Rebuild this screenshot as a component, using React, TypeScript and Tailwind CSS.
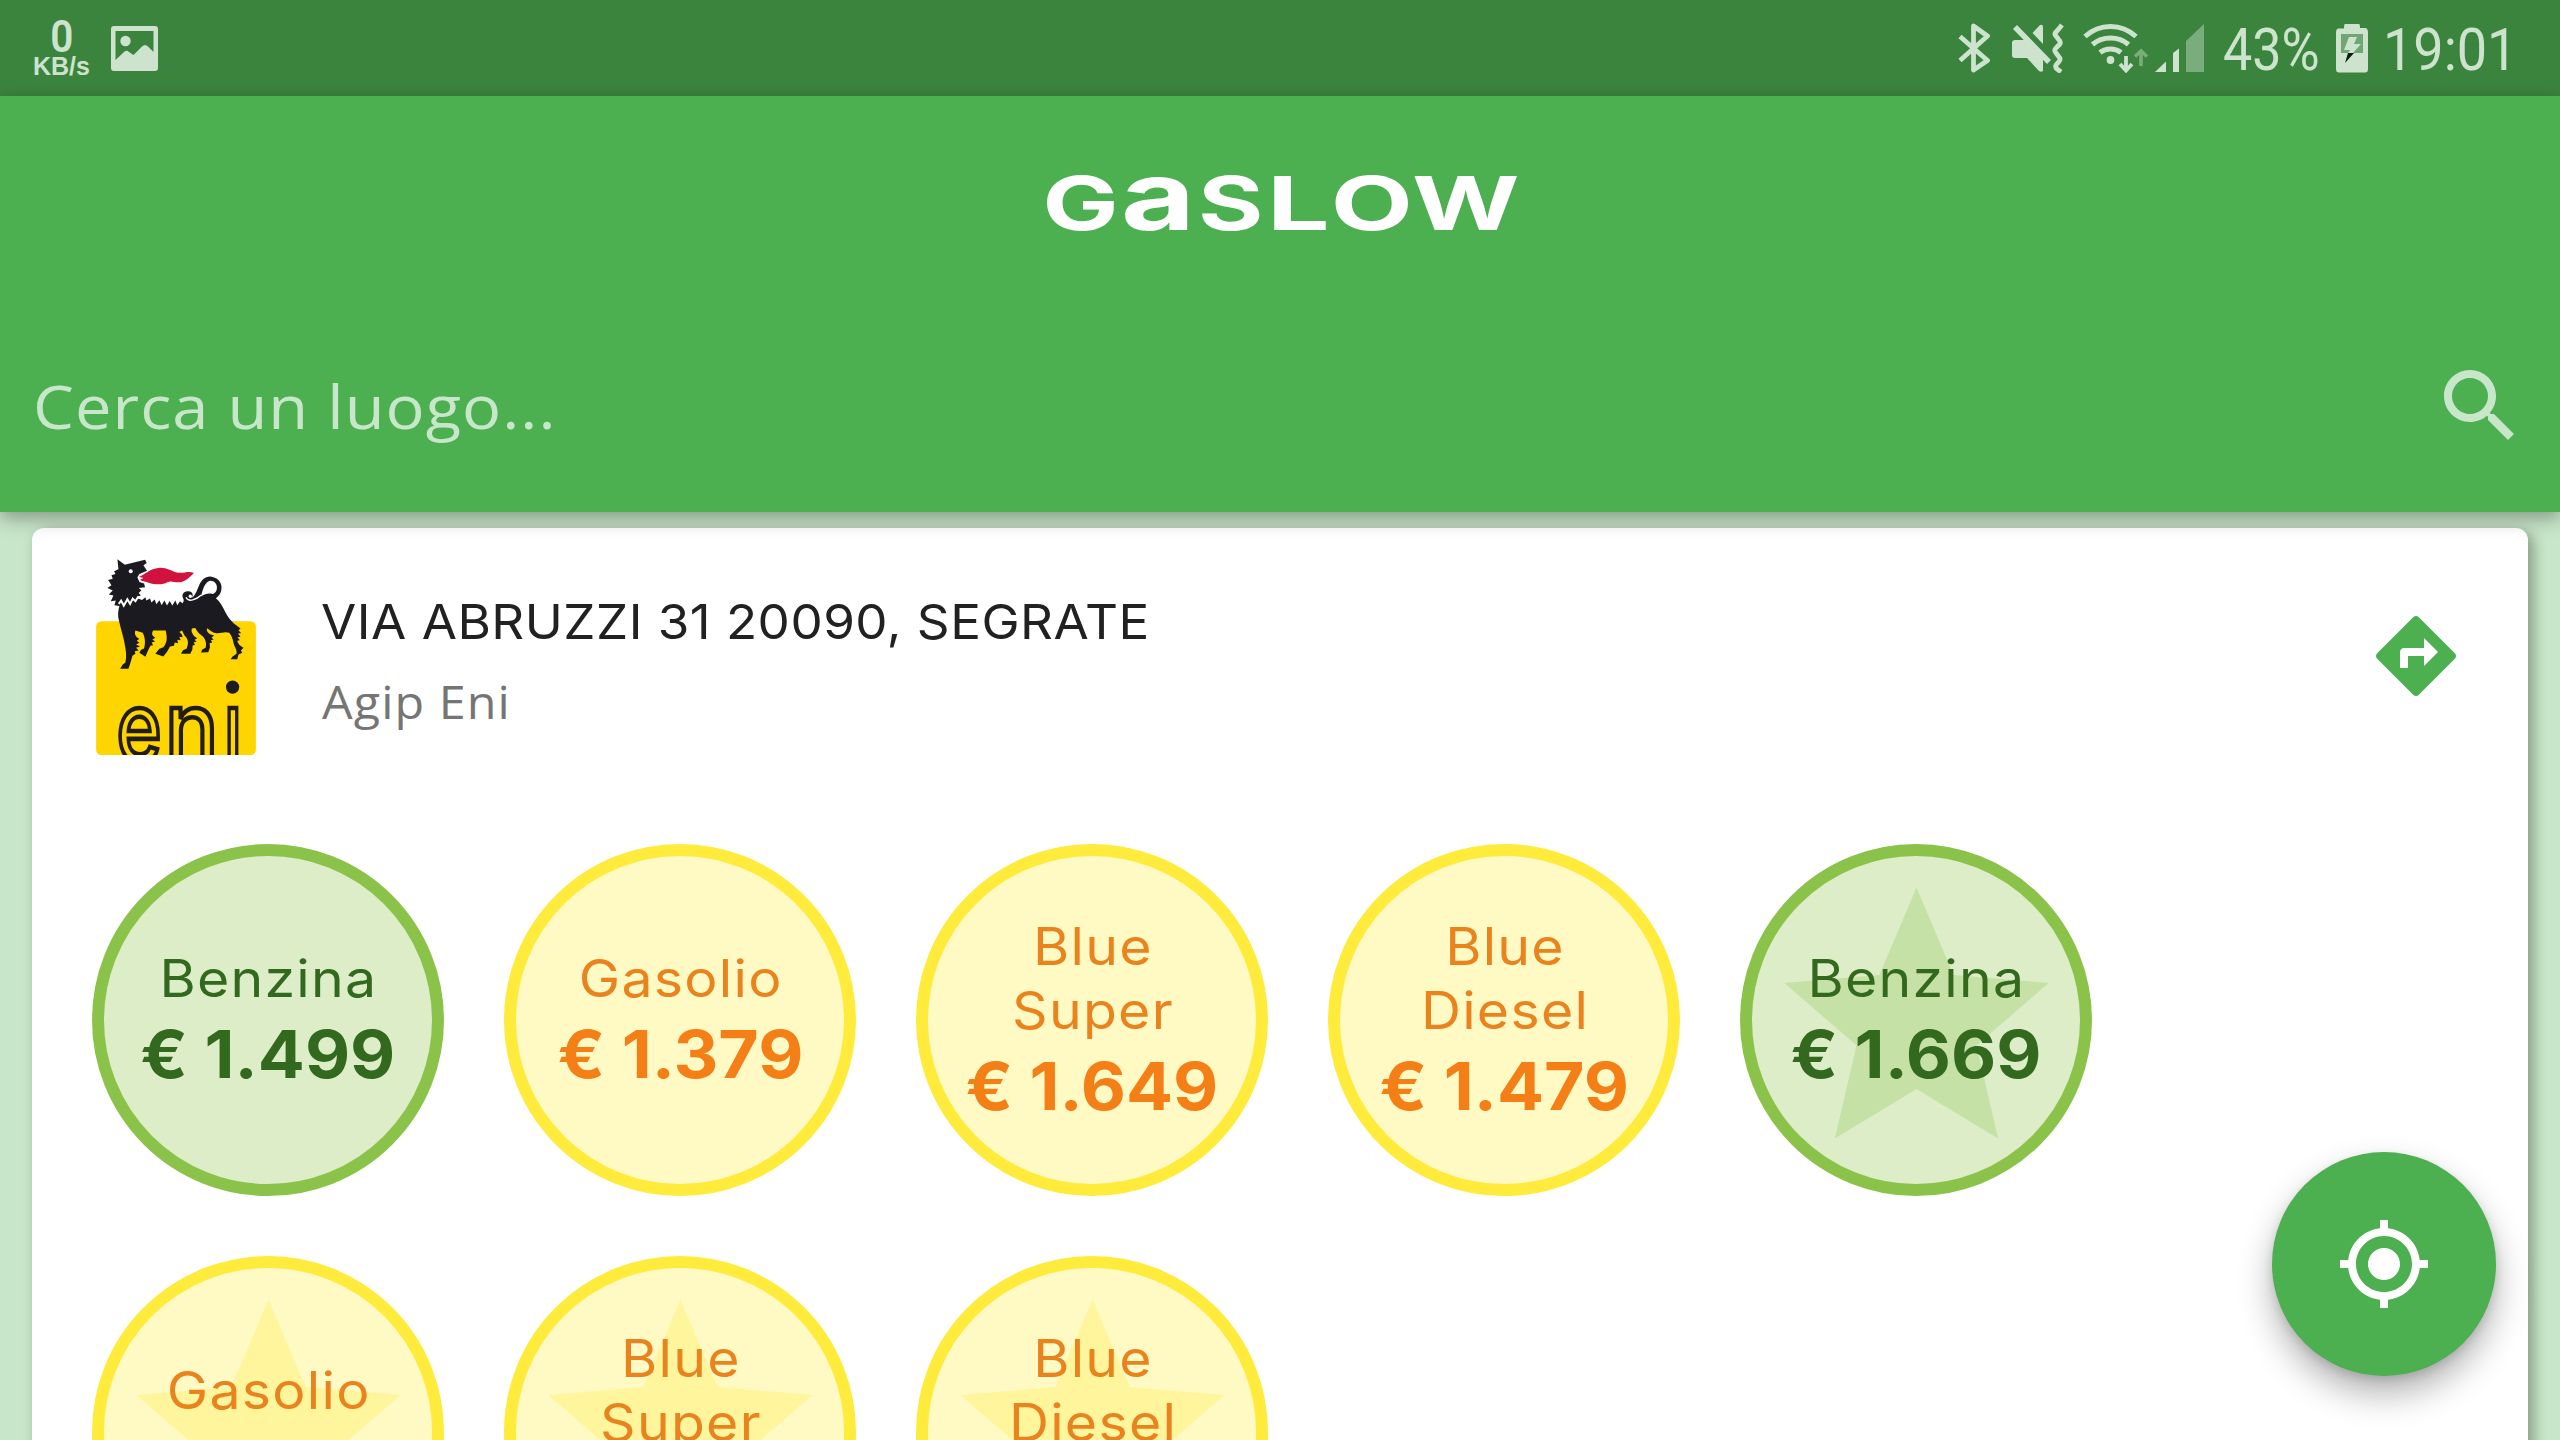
type Tone = "green" | "yellow";

interface Fuel {
  label: string[];
  price: string;
  tone: Tone;
  starred?: boolean;
}

const fuels: Fuel[] = [
  { label: ["Benzina"], price: "€ 1.499", tone: "green" },
  { label: ["Gasolio"], price: "€ 1.379", tone: "yellow" },
  { label: ["Blue", "Super"], price: "€ 1.649", tone: "yellow" },
  { label: ["Blue", "Diesel"], price: "€ 1.479", tone: "yellow" },
  { label: ["Benzina"], price: "€ 1.669", tone: "green", starred: true },
  { label: ["Gasolio"], price: "€ 1.379", tone: "yellow", starred: true },
  { label: ["Blue", "Super"], price: "€ 1.649", tone: "yellow", starred: true },
  { label: ["Blue", "Diesel"], price: "€ 1.479", tone: "yellow", starred: true },
];

const tones: Record<Tone, { ring: string; label: string; price: string; star: string }> = {
  green: {
    ring: "border-[#8bc34a] bg-[#dcedc8]",
    label: "text-[#33691e]",
    price: "text-[#33691e]",
    star: "text-[#c5e1a5]",
  },
  yellow: {
    ring: "border-[#ffeb3b] bg-[#fff9c4]",
    label: "text-[#e8831e]",
    price: "text-[#f57f17]",
    star: "text-[#fff59d]",
  },
};

function FuelBadge({ fuel }: { fuel: Fuel }) {
  const tone = tones[fuel.tone];
  return (
    <div
      className={`relative flex h-[352px] w-[352px] flex-col items-center justify-center rounded-full border-[12px] ${tone.ring}`}
    >
      {fuel.starred && (
        <svg
          viewBox="0 0 24 24"
          className={`absolute top-[5px] left-[5.5px] h-[317px] w-[317px] ${tone.star}`}
          fill="currentColor"
        >
          <path d="M12 17.27 18.18 21l-1.64-7.03L22 9.24l-7.19-.61L12 2 9.19 8.63 2 9.24l5.46 4.73L5.82 21z" />
        </svg>
      )}
      <div
        className={`relative scale-x-[1.065] pl-px text-center text-[52px] leading-[64px] tracking-[1.2px] ${tone.label}`}
      >
        {fuel.label.map((line) => (
          <div key={line}>{line}</div>
        ))}
      </div>
      <div
        className={`relative scale-x-[1.055] pt-1 text-[66px] leading-[78px] font-bold whitespace-nowrap ${tone.price}`}
      >
        {fuel.price}
      </div>
    </div>
  );
}

const logoGlyphs = [
  { ch: "G", x: 2.6, k: 1.37, size: 74 },
  { ch: "a", x: 81, k: 1.33, size: 96 },
  { ch: "S", x: 158, k: 1.35, size: 74 },
  { ch: "L", x: 227, k: 1.5, size: 74 },
  { ch: "O", x: 290.7, k: 1.44, size: 74 },
  { ch: "W", x: 372, k: 1.4, size: 74 },
];

function GaslowLogo() {
  return (
    <svg viewBox="0 0 480 80" className="h-20 w-[480px] overflow-visible" fill="#fff" fontFamily="Inter" fontWeight="700">
      {logoGlyphs.map((g) => (
        <text key={g.ch} fontSize={g.size} transform={`translate(${g.x} 68) scale(${g.k} 1)`}>
          {g.ch}
        </text>
      ))}
    </svg>
  );
}

function EniLogo() {
  return (
    <svg viewBox="48 50 480 592" className="h-[197px] w-40 shrink-0">
      <defs>
        <clipPath id="eni-box">
          <rect x="48" y="240" width="480" height="402" rx="16" />
        </clipPath>
      </defs>
      <rect x="48" y="240" width="480" height="402" rx="16" fill="#ffd500" />
      <g
        clipPath="url(#eni-box)"
        fontFamily="Inter"
        fontSize="296"
        fontWeight="500"
        fill="#ffd500"
        stroke="#221d14"
        strokeWidth="14"
        textAnchor="middle"
      >
        <text transform="translate(177 662) scale(.78 1)">e</text>
        <text transform="translate(335 662) scale(.9 1)">n</text>
        <text transform="translate(459 662) scale(.72 1)">i</text>
        <rect x="426" y="400" width="66" height="85" fill="#ffd500" stroke="none" />
        <circle cx="458" cy="438" r="20" fill="#1c1c22" stroke="none" />
      </g>
      <path
        fill="#1a1a20"
        d="M112 54 134 70 195 55 200 65 190 72 201 88 178 98 172 108 178 122 192 127 195 138 176 140 184 147 176 155 182 162 170 170 186 176 196 168 199 178 210 172 214 184 224 175 229 189 238 177 245 192 253 178 261 193 269 179 277 193 286 178 292 192 300 180 307 186 C311 182 313 176 309 170 C303 156 316 146 330 151 C340 155 340 165 334 171 C345 165 350 150 356 136 C364 114 378 104 394 106 C418 109 430 130 423 151 C421 160 415 166 408 171 C420 181 428 196 436 212 C444 228 452 236 462 247 L482 262 476 267 484 276 474 277 482 287 473 288 480 297 472 299 C474 308 480 315 491 320 L483 328 487 335 476 340 472 354 452 354 458 346 470 338 C472 326 464 318 461 306 C458 292 454 282 448 275 C434 270 424 277 410 276 C398 275 392 268 382 261 C378 268 384 274 390 279 L403 283 395 289 401 295 393 297 397 304 389 306 390 318 385 333 363 334 367 325 377 320 C381 306 376 292 366 284 C356 276 350 268 346 260 L336 262 C332 270 338 280 345 287 L352 291 344 296 350 302 341 303 345 311 338 313 337 325 331 338 303 338 309 327 320 322 C326 308 326 294 314 284 L306 268 298 272 C306 278 309 284 307 288 L298 287 302 297 292 296 294 306 284 304 282 314 270 316 262 330 250 346 226 338 238 323 250 318 C262 304 262 290 257 268 L219 268 C214 278 216 284 226 290 L217 295 225 301 215 304 219 312 211 314 204 328 196 347 178 335 183 326 192 322 C196 306 196 292 188 275 L166 268 C162 280 168 288 178 293 L170 299 178 305 168 310 180 316 168 320 176 328 164 330 166 338 157 344 C154 356 150 370 145 383 L120 383 128 370 136 364 C140 346 138 330 134 310 C130 284 122 264 117 240 C112 222 114 208 118 194 L103 192 107 178 92 180 100 163 86 160 98 148 82 140 94 132 84 116 98 112 94 102 106 98 102 90 115 84Z"
      />
      <path
        fill="none"
        stroke="#fff"
        strokeWidth="6"
        d="M116 188 123 178 131 193 142 174 150 188 158 172 166 180 174 167 184 171"
      />
      <path
        fill="#fff"
        d="M363 166 C367 150 372 126 388 119 C404 116 415 132 410 146 C408 153 403 157 398 158 C386 155 374 158 363 166Z"
      />
      <path d="M318 168q6 12 20 8 16-5 26-15" fill="none" stroke="#fff" strokeWidth="4" />
      <circle cx="331" cy="165" r="5" fill="#fff" />
      <circle cx="152" cy="90" r="6" fill="#fff" />
      <path
        fill="#d1113e"
        d="M177 106 C195 99 212 80 240 79 C262 79 276 90 294 94 C312 97 324 88 342 95 C330 107 316 121 298 123 C282 124 274 117 262 123 C248 132 222 130 206 124 C198 120 188 122 180 115 L190 110Z"
      />
    </svg>
  );
}

function StatusBar() {
  return (
    <div className="flex h-24 shrink-0 items-center bg-[#3b843e] text-[#cde3ce]">
      <div className="ml-[33px] flex w-[57px] flex-col items-center pt-0.5">
        <span className="scale-x-90 font-[Roboto] text-[45px] leading-[34px] font-semibold">0</span>
        <span className="font-['Liberation_Sans'] text-[25px] leading-[25px] font-bold">KB/s</span>
      </div>
      <svg viewBox="0 0 47 45" className="ml-[21px] h-[45px] w-[47px]" fill="currentColor">
        <path
          fillRule="evenodd"
          d="M3 0H44Q47 0 47 3V42Q47 45 44 45H3Q0 45 0 42V3Q0 0 3 0ZM4.500 5V34L13 26Q15.500 23.500 18 26L22.500 29 31 20.500Q34 17.500 37 20.500L42.500 26V5Z"
        />
        <circle cx="14.500" cy="15" r="5.200" />
      </svg>

      <div className="ml-auto flex w-[602px] items-center">
        <svg viewBox="0 0 33 50" className="h-[50px] w-[33px] shrink-0" fill="none" stroke="currentColor" strokeWidth="4.800" strokeLinejoin="round">
          <path d="M2 13.500 29.500 37.500 15.500 47V3L29.500 13 2 37.500" />
        </svg>
        <svg viewBox="0 0 53 50" className="ml-5 h-[50px] w-[53px] shrink-0" fill="currentColor">
          <path d="M1 20Q1 17 4 17H11L15 17 32 34V48Q30 49.500 28 48L16 35H4Q1 35 1 32Z" />
          <path d="M21.500 10 29 2Q32 1 32 4V21Z" />
          <path d="M4 4 38 39" stroke="currentColor" strokeWidth="5.500" />
          <path
            d="M51 2 45 9Q43 11 45 13L48 17Q50.500 19.500 48 22L45 25Q42.500 27 45 30L48 34Q50 36 48 38.500L45 42Q44 44 46 46L50 49"
            fill="none"
            stroke="currentColor"
            strokeWidth="4.800"
          />
        </svg>
        <svg viewBox="0 0 67 50" className="ml-[18px] h-[50px] w-[67px] shrink-0" fill="none" stroke="currentColor">
          <path d="M3 13.500Q14 3.500 28.500 3.500T54 13.500" strokeWidth="5" />
          <path d="M10.500 21.500Q18 15 28.500 15T46.500 21.500" strokeWidth="5" />
          <path d="M18 29.500Q22.500 26 28.500 26T39 29.500" strokeWidth="5" />
          <ellipse cx="28.500" cy="37" rx="3.800" ry="4" fill="currentColor" stroke="none" />
          <path d="M44 33V47M38 41 44 47.500 50 41" strokeWidth="3.800" />
          <path d="M59 43V29M53 33.500 59 28 65 33.500" strokeWidth="3.600" stroke="#79ad7b" />
        </svg>
        <svg viewBox="0 0 49 50" className="ml-1.5 h-[50px] w-[49px] shrink-0" fill="currentColor">
          <path d="M0 49 11 38.500V49Z" />
          <path d="M18 30 24 25.500V49H18Z" />
          <path d="M31 18 49 1V49H31Z" fill="#79ad7b" />
        </svg>
        <span className="ml-[19px] w-[96px] shrink-0 origin-left scale-x-[0.867] pt-[3px] font-[Roboto] text-[60px] leading-[70px] whitespace-nowrap">
          43%
        </span>
        <svg viewBox="0 0 32 49" className="ml-[17px] h-[49px] w-8 shrink-0" fill="currentColor">
          <path d="M9 0H23Q24 0 24 4H30Q32 5 32 8V45Q32 48.500 29 48.500H3Q0 48.500 0 45V8Q0 5 2 4.500H8Q8 0 9 0Z" />
          <path d="M5 10H27V29H5Z" fill="#6fa672" />
          <path d="M13 13H21L18 20H25L17 29H12L14 26H8Z" fill="currentColor" />
          <path d="M12 29H18L9 39Z" fill="#0d1a0d" />
        </svg>
        <span className="ml-[15px] w-[140px] shrink-0 origin-left scale-x-90 pt-[3px] font-[Roboto] text-[60px] leading-[70px] whitespace-nowrap">
          19:01
        </span>
      </div>
    </div>
  );
}

function StationCard() {
  return (
    <section className="mx-8 mt-4 h-[1120px] shrink-0 rounded-xl bg-white shadow-[5px_4px_14px_rgba(0,0,0,0.34)]">
      <header className="flex h-64 items-center pr-16 pl-16">
        <EniLogo />
        <div className="ml-[65px] flex flex-1 flex-col pt-[10px]">
          <h2 className="origin-left scale-x-[1.055] text-[48.5px] leading-[64px] tracking-[0.45px] text-[#212121]">
            VIA ABRUZZI 31 20090, SEGRATE
          </h2>
          <p className="mt-[18px] origin-left scale-x-[1.076] pl-px font-['Open_Sans'] text-[45px] leading-[60px] tracking-[1px] text-[#757575]">
            Agip Eni
          </p>
        </div>
        <svg viewBox="0 0 24 24" className="h-24 w-24" fill="#4caf50">
          <path d="M21.710 11.290l-9-9c-.39-.39-1.020-.39-1.410 0l-9 9c-.39.39-.39 1.020 0 1.410l9 9c.39.39 1.020.39 1.410 0l9-9c.39-.38.39-1.010 0-1.410zM14 14.500V12h-4v3H8v-4c0-.55.45-1 1-1h5V7.500l3.500 3.500-3.500 3.500z" />
        </svg>
      </header>
      <div className="grid grid-cols-[repeat(5,352px)] gap-[60px] pt-[60px] pl-[60px]">
        {fuels.map((fuel, i) => (
          <FuelBadge key={i} fuel={fuel} />
        ))}
      </div>
    </section>
  );
}

export default function App() {
  return (
    <div className="relative flex h-[1440px] w-[2560px] flex-col overflow-hidden bg-[#c8e6c9] font-[Inter]">
      <StatusBar />
      <div className="relative z-10 flex h-[416px] shrink-0 flex-col bg-[#4caf50] shadow-[0_6px_18px_rgba(0,0,0,0.34)]">
        <h1 className="flex justify-center pt-[66px]">
          <GaslowLogo />
        </h1>
        <div className="mt-[116px] flex h-24 items-center justify-between pr-8 pl-[33px]">
          <span className="origin-left scale-x-[1.065] font-['Open_Sans'] text-[61px] leading-[94px] tracking-[1px] text-[#c8e6c9]">
            Cerca un luogo...
          </span>
          <svg viewBox="0 0 24 24" className="h-24 w-24" fill="#c8e6c9">
            <path d="M15.500 14h-.79l-.28-.27C15.410 12.590 16 11.110 16 9.500 16 5.910 13.090 3 9.500 3S3 5.910 3 9.500 5.910 16 9.500 16c1.610 0 3.090-.59 4.230-1.570l.27.28v.79l5 4.990L20.490 19l-4.990-5zm-6 0C7.010 14 5 11.990 5 9.500S7.010 5 9.500 5 14 7.010 14 9.500 11.990 14 9.500 14z" />
          </svg>
        </div>
      </div>
      <StationCard />
      <button className="absolute right-16 bottom-16 z-20 flex h-56 w-56 items-center justify-center rounded-full bg-[#4caf50] shadow-[0_18px_34px_rgba(0,0,0,0.3),0_4px_10px_rgba(0,0,0,0.12)]">
        <svg viewBox="0 0 24 24" className="h-24 w-24" fill="#fff">
          <path d="M12 8c-2.210 0-4 1.790-4 4s1.790 4 4 4 4-1.790 4-4-1.790-4-4-4zm8.940 3c-.46-4.170-3.770-7.480-7.940-7.940V1h-2v2.060C6.830 3.520 3.520 6.830 3.060 11H1v2h2.060c.46 4.170 3.770 7.480 7.940 7.940V23h2v-2.060c4.170-.46 7.480-3.770 7.940-7.940H23v-2h-2.060zM12 19c-3.870 0-7-3.130-7-7s3.130-7 7-7 7 3.130 7 7-3.130 7-7 7z" />
        </svg>
      </button>
    </div>
  );
}
